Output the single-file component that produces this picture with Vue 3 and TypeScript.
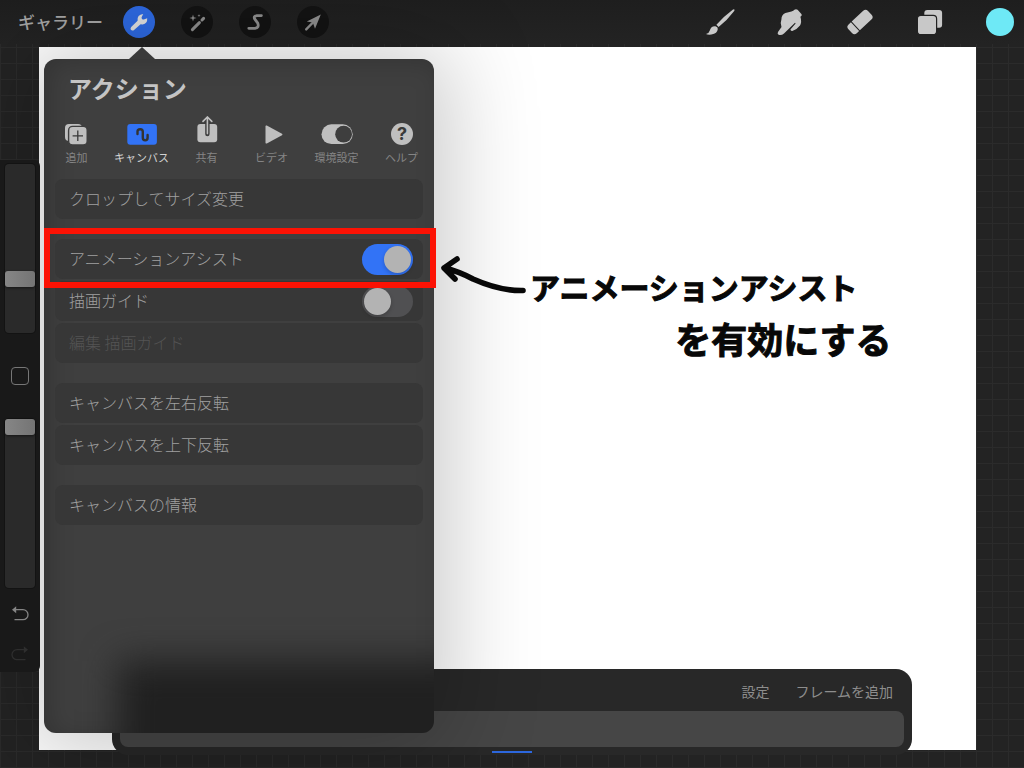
<script setup lang="ts">
import { ref } from 'vue'

interface Tab { id: string; label: string }
interface Row { label: string; kind: 'button' | 'switch'; on?: boolean; disabled?: boolean; marked?: boolean }

const tabs: Tab[] = [
  { id: 'add', label: '追加' },
  { id: 'canvas', label: 'キャンバス' },
  { id: 'share', label: '共有' },
  { id: 'video', label: 'ビデオ' },
  { id: 'prefs', label: '環境設定' },
  { id: 'help', label: 'ヘルプ' },
]
const activeTab = ref('canvas')

const groups = ref<Row[][]>([
  [{ label: 'クロップしてサイズ変更', kind: 'button' }],
  [
    { label: 'アニメーションアシスト', kind: 'switch', on: true, marked: true },
    { label: '描画ガイド', kind: 'switch', on: false },
    { label: '編集 描画ガイド', kind: 'button', disabled: true },
  ],
  [
    { label: 'キャンバスを左右反転', kind: 'button' },
    { label: 'キャンバスを上下反転', kind: 'button' },
  ],
  [{ label: 'キャンバスの情報', kind: 'button' }],
])

const brushSize = ref(30)
const brushOpacity = ref(100)
</script>

<template>
  <div class="app">
    <header class="topbar">
      <button class="gallery" type="button">ギャラリー</button>
      <nav class="modes">
        <button class="mode active" type="button" aria-label="アクション">
          <svg viewBox="0 0 24 24"><path d="M16.2 4 L14.6 7.2 Q14.4 9.6 16.8 9.6 L20.2 8.2 Q20.6 13.8 15.6 14.4 L13.6 14.2 L6.8 20.2 Q5 21 3.9 19.8 Q3 18.4 4.2 17 L10.6 10.8 Q9.8 4.8 16.2 4Z" fill="#dcdcdc" /></svg>
        </button>
        <button class="mode" type="button" aria-label="調整">
          <svg viewBox="0 0 24 24" fill="none" stroke="#8c8c8c" stroke-linecap="round">
            <path d="M7.4 19.6 L14.4 12.6 M17 10 L18.6 8.4" stroke-width="3" />
            <path d="M8 4.4 L8.8 7.2 L11.6 8 L8.8 8.8 L8 11.6 L7.2 8.8 L4.4 8 L7.2 7.2Z M14 4 L14.4 5.2 L15.6 5.6 L14.4 6 L14 7.2 L13.6 6 L12.4 5.6 L13.6 5.2Z" fill="#8c8c8c" stroke="none" />
          </svg>
        </button>
        <button class="mode" type="button" aria-label="選択">
          <svg viewBox="0 0 24 24" fill="none" stroke="#8c8c8c" stroke-width="2.8" stroke-linecap="round" stroke-linejoin="round"><path d="M18.4 5.6 H14 Q10 6.2 11.8 9.2 L14.8 13.2 Q16.4 17.8 12 18.3 H5.8" /></svg>
        </button>
        <button class="mode" type="button" aria-label="変形">
          <svg viewBox="0 0 24 24"><path d="M19.8 4.4 L14 18.8 L11.8 12.6 L5.8 11.4Z" fill="#8c8c8c" /><path d="M5.2 19.4 L12.4 12" stroke="#8c8c8c" stroke-width="2.4" stroke-linecap="round" /></svg>
        </button>
      </nav>
      <nav class="tools">
        <button class="tool" type="button" aria-label="ブラシ">
          <svg viewBox="0 0 30 30" fill="#c8c8c8">
            <path d="M29.2 2.2 Q30 3 29 4.2 Q22 13.5 13.6 20 L11.4 17.8 Q19 9 28 2.4Z" />
            <path d="M10.4 19.2 Q13 20 12.8 22 Q12.4 26.6 6.4 27.6 Q2.6 28 1 27 Q4 26.4 4.8 23.4 Q6 18.8 10.4 19.2Z" />
          </svg>
        </button>
        <button class="tool" type="button" aria-label="ぼかし">
          <svg viewBox="0 0 30 30" fill="#c8c8c8"><path d="M3 25 L6.5 20 Q5 16 6.4 12.6 Q6.4 7.6 10.4 6 Q13.6 5.6 16.4 4.6 Q18.6 4 19.4 2.8 Q21 1.6 22.6 2.8 L26.6 7.2 Q27.2 8.8 25.4 9.8 Q27 15 25 18.6 Q22 22.6 17.4 24 Q15.6 24 15.4 22.4 L20.6 16.6 L20 15.8 L9 26.4 Q6.6 28.6 3.6 27.8 Q2 27 3 25Z" /></svg>
        </button>
        <button class="tool" type="button" aria-label="消しゴム">
          <svg viewBox="0 0 30 30" fill="#c8c8c8">
            <g transform="rotate(-43 15 15)">
              <path d="M5 9 H8.2 V21 H5 Q1.6 21 1.6 17.6 V12.4 Q1.6 9 5 9Z" />
              <path d="M9.2 9 H25 Q28.4 9 28.4 12.4 V17.6 Q28.4 21 25 21 H9.2Z" />
            </g>
          </svg>
        </button>
        <button class="tool" type="button" aria-label="レイヤー">
          <svg viewBox="0 0 30 30" fill="#c8c8c8">
            <rect x="9.3" y="3" width="17.8" height="17.8" rx="3" />
            <rect x="2.4" y="8.4" width="19.2" height="19.2" rx="3.4" stroke="#222" stroke-width="1.2" />
          </svg>
        </button>
        <button class="tool" type="button" aria-label="カラー"><span class="swatch"></span></button>
      </nav>
    </header>

    <main class="workspace">
      <aside class="sidebar">
        <input v-model="brushSize" class="slider" type="range" min="0" max="100" aria-label="ブラシサイズ">
        <button class="modify" type="button" aria-label="修正"></button>
        <input v-model="brushOpacity" class="slider" type="range" min="0" max="100" aria-label="不透明度">
        <button class="history undo" type="button" aria-label="取り消す">
          <svg viewBox="0 0 20 20"><path d="M6 5.7 H13 A5 5 0 0 1 13 15.7 H4.5" fill="none" stroke="currentColor" stroke-width="1.3" /><path d="M2 5.7 L6.2 2.2 V9.2Z" fill="currentColor" /></svg>
        </button>
        <button class="history redo" type="button" aria-label="やり直す">
          <svg viewBox="0 0 20 20"><path d="M14 5.7 H7 A5 5 0 0 0 7 15.7 H15.5" fill="none" stroke="currentColor" stroke-width="1.3" /><path d="M18 5.7 L13.8 2.2 V9.2Z" fill="currentColor" /></svg>
        </button>
      </aside>

      <section class="canvas">
        <div class="note">
          <svg class="arrow" viewBox="0 0 90 42" fill="none" stroke="#080808" stroke-width="5.6" stroke-linecap="round" stroke-linejoin="round">
            <path d="M17 7 L4 16 L15 27 M4 16 Q18 19 33 27 Q60 39 83 38.5" />
          </svg>
          <p class="note-text"><span class="line-one">アニメーションアシスト</span><span class="line-two">を有効にする</span></p>
        </div>
      </section>
    </main>

    <footer class="timeline">
      <div class="timeline-actions">
        <button type="button">設定</button>
        <button type="button">フレームを追加</button>
      </div>
      <div class="tray"></div>
      <div class="playhead"></div>
    </footer>

    <section class="popover" aria-label="アクション">
      <div class="backdrop"></div>
      <h1>アクション</h1>
      <div class="tabs" role="tablist">
        <button
          v-for="tab in tabs" :key="tab.id" type="button" role="tab" class="tab"
          :class="{ selected: tab.id === activeTab }" :aria-selected="tab.id === activeTab"
          @click="activeTab = tab.id"
        >
          <svg viewBox="0 0 32 32" fill="#bfbfbf">
            <template v-if="tab.id === 'add'">
              <rect x="4" y="8" width="17" height="17" rx="4" />
              <rect x="7.6" y="10.4" width="18.6" height="18.6" rx="4" stroke="#3e3e3e" stroke-width="1.4" />
              <path d="M16.8 14.6 V25 M11.6 19.8 H22" stroke="#3a3a3a" stroke-width="1.3" />
            </template>
            <template v-else-if="tab.id === 'canvas'">
              <rect x="1.3" y="8" width="29.6" height="20.8" rx="3" fill="#3273f6" />
              <path d="M11.5 18 V15.6 Q11.5 13.2 14.2 13.2 Q16.8 13.2 16.8 15.8 V21.8 Q16.8 24.4 19.2 24.4 Q21.6 24.4 21.6 21.8 V19" fill="none" stroke="#333" stroke-width="2.4" stroke-linecap="round" />
            </template>
            <template v-else-if="tab.id === 'share'">
              <rect x="6.4" y="8" width="19.8" height="18.2" rx="3" />
              <path d="M16.4 5 V18" stroke="#3e3e3e" stroke-width="4.4" stroke-linecap="round" />
              <path d="M16.4 1.2 V17.6 M12 5.4 L16.4 1 L20.8 5.4" fill="none" stroke="#bfbfbf" stroke-width="1.6" stroke-linecap="round" />
            </template>
            <path v-else-if="tab.id === 'video'" d="M9.5 10.4 Q9.5 9 10.8 9.6 L26 17.8 Q27 18.5 26 19.2 L10.8 27.4 Q9.5 28 9.5 26.8Z" />
            <template v-else-if="tab.id === 'prefs'">
              <rect x="0.5" y="8.3" width="31.2" height="19.8" rx="9.9" />
              <circle cx="22.6" cy="18.2" r="8.4" fill="#3e3e3e" />
            </template>
            <template v-else>
              <circle cx="16" cy="18" r="11" />
              <text x="16" y="24.4" text-anchor="middle" font-family="Inter, 'Liberation Sans', sans-serif" font-size="18" font-weight="700" fill="#3a3a3a">?</text>
            </template>
          </svg>
          <span>{{ tab.label }}</span>
        </button>
      </div>

      <div class="groups">
        <div v-for="(group, g) in groups" :key="g" class="group">
          <template v-for="row in group" :key="row.label">
            <label v-if="row.kind === 'switch'" class="row" :class="{ marked: row.marked }">
              <span class="row-label">{{ row.label }}</span>
              <input v-model="row.on" class="switch" type="checkbox">
            </label>
            <button v-else class="row" type="button" :disabled="row.disabled"><span class="row-label">{{ row.label }}</span></button>
          </template>
        </div>
      </div>
    </section>
  </div>
</template>

<style>
body {
  margin: 0;
  background: #232323;
}
</style>

<style scoped>
.app {
  position: relative;
  display: flex;
  flex-direction: column;
  box-sizing: border-box;
  min-height: 100vh;
  overflow: hidden;
  background-color: #232323;
  background-image:
    linear-gradient(90deg, #2b2b2b 1px, transparent 1px),
    linear-gradient(#2b2b2b 1px, transparent 1px);
  background-size: 16px 16px;
  background-position: 0 15px;
  font-family: "Noto Sans CJK JP", "Noto Sans", sans-serif;
}

button {
  margin: 0;
  padding: 0;
  border: 0;
  background: none;
  color: inherit;
  font: inherit;
}

svg {
  display: block;
}

.topbar {
  display: flex;
  align-items: center;
  box-sizing: border-box;
  height: 44px;
  padding: 0 9px 0 18px;
  background: linear-gradient(#1e1e1e, #232323);
}

.gallery {
  color: #a3a3a3;
  font-size: 17px;
  font-weight: 500;
  line-height: 24px;
}

.modes {
  display: flex;
  gap: 26px;
  margin-left: 20px;
}

.mode {
  display: grid;
  place-items: center;
  width: 32px;
  height: 32px;
  border-radius: 50%;
  background: #131313;
}

.mode.active {
  background: #2d68df;
}

.mode svg {
  width: 24px;
  height: 24px;
}

.tools {
  display: flex;
  gap: 40px;
  margin-left: auto;
}

.tool {
  display: grid;
  place-items: center;
  width: 30px;
  height: 30px;
}

.tool svg {
  width: 30px;
  height: 30px;
}

.swatch {
  width: 28px;
  height: 28px;
  border-radius: 50%;
  background: #6ee9f6;
}

.workspace {
  display: flex;
  flex: 1;
  align-items: flex-start;
  padding: 3px 48px 18px 0;
}

.sidebar {
  z-index: 4;
  display: flex;
  flex-direction: column;
  align-items: center;
  box-sizing: border-box;
  width: 40px;
  margin: 113px -1px 0 0;
  padding: 4px 0 8px;
  border-radius: 0 6px 6px 0;
  background: #191919;
}

.slider {
  appearance: none;
  writing-mode: vertical-lr;
  direction: rtl;
  box-sizing: border-box;
  width: 30px;
  height: 169px;
  margin: 0;
  border-radius: 4px;
  background: #2a2a2a;
  box-shadow: 0 0 0 1px #131313;
}

.slider::-webkit-slider-thumb {
  appearance: none;
  width: 30px;
  height: 16px;
  border-radius: 3px;
  background: linear-gradient(90deg, #868686, #747474);
  box-shadow: 0 1px 3px rgba(0, 0, 0, 0.5);
}

.modify {
  box-sizing: border-box;
  width: 18px;
  height: 18px;
  margin: 34px 0;
  border: 1px solid #767676;
  border-radius: 4px;
}

.history svg {
  width: 20px;
  height: 20px;
}

.undo {
  margin-top: 16px;
  color: #858585;
}

.redo {
  margin-top: 20px;
  color: #2e2e2e;
}

.canvas {
  position: relative;
  flex: 1;
  align-self: stretch;
  background: #fff;
}

.note {
  position: absolute;
  z-index: 4;
  top: 205px;
  left: 401px;
  display: flex;
  align-items: flex-start;
}

.arrow {
  width: 90px;
  height: 42px;
}

.note-text {
  display: flex;
  flex-direction: column;
  align-items: flex-end;
  margin: 12px 0 0;
  color: #080808;
  font-weight: 700;
  white-space: nowrap;
  -webkit-text-stroke: 1px #080808;
}

.line-one {
  margin-right: 34px;
  font-size: 30px;
  line-height: 44px;
}

.line-two {
  font-size: 36px;
  line-height: 60px;
}

.timeline {
  position: absolute;
  right: 112px;
  bottom: 13px;
  left: 112px;
  display: flex;
  flex-direction: column;
  box-sizing: border-box;
  height: 86px;
  padding: 0 8px 8px;
  border-radius: 16px;
  background: #282828;
}

.timeline-actions {
  display: flex;
  justify-content: flex-end;
  align-items: center;
  gap: 26px;
  height: 42px;
  padding: 2px 11px 0 0;
  box-sizing: border-box;
  color: #8d8d8d;
  font-size: 14px;
  line-height: 20px;
}

.tray {
  flex: 1;
  border-radius: 8px;
  background: #464646;
}

.playhead {
  position: absolute;
  bottom: 2px;
  left: 50%;
  width: 40px;
  height: 2px;
  margin-left: -20px;
  background: #2d68df;
}

.popover {
  position: absolute;
  z-index: 3;
  top: 59px;
  bottom: 35px;
  left: 44px;
  width: 390px;
  border-radius: 12px;
  background: #3f3f3f;
  box-shadow: 0 4px 90px 16px rgba(0, 0, 0, 0.21);
}

.popover::before {
  content: "";
  position: absolute;
  top: -12px;
  left: 85px;
  width: 26px;
  height: 12px;
  background: #3a3a3a;
  clip-path: polygon(50% 0, 100% 100%, 0 100%);
}

.backdrop {
  position: absolute;
  inset: 0;
  overflow: hidden;
  border-radius: 12px;
  box-shadow: inset 6px 3px 24px rgba(0, 0, 0, 0.18);
}

.backdrop::before {
  content: "";
  position: absolute;
  right: -60px;
  bottom: -60px;
  left: 74px;
  height: 132px;
  background: #202020;
  filter: blur(18px);
}

.popover h1 {
  position: relative;
  margin: 0;
  padding: 13px 24px 0;
  color: #c4c4c4;
  font-size: 24px;
  font-weight: 700;
  line-height: 32px;
}

.tabs {
  position: relative;
  display: grid;
  grid-template-columns: repeat(6, 1fr);
  margin-top: 12px;
}

.tab {
  display: flex;
  flex-direction: column;
  align-items: center;
  gap: 1px;
  color: #858585;
  font-size: 11px;
  line-height: 16px;
  white-space: nowrap;
}

.tab.selected {
  color: #d2d2d2;
}

.tab svg {
  width: 32px;
  height: 32px;
}

.groups {
  position: relative;
  display: flex;
  flex-direction: column;
  gap: 20px;
  padding: 14px 11px 0;
}

.group {
  display: flex;
  flex-direction: column;
  gap: 2px;
}

.row {
  position: relative;
  display: flex;
  align-items: center;
  justify-content: space-between;
  box-sizing: border-box;
  height: 40px;
  padding: 0 10px 0 14px;
  border-radius: 8px;
  background: #373737;
  color: #a0a0a0;
  font-size: 16px;
  font-weight: 300;
  line-height: 24px;
  text-align: left;
}

.row-label {
  padding-bottom: 2px;
}

.row:disabled {
  color: #545454;
}

.row.marked {
  z-index: 1;
}

.row.marked::after {
  content: "";
  position: absolute;
  inset: -11px -13px -9px -11px;
  border: 6px solid #fc1204;
  pointer-events: none;
}

.switch {
  appearance: none;
  position: relative;
  width: 51px;
  height: 31px;
  margin: 0;
  border-radius: 16px;
  background: #505052;
}

.switch::before {
  content: "";
  position: absolute;
  top: 2px;
  left: 2px;
  width: 27px;
  height: 27px;
  border-radius: 50%;
  background: #b3b3b3;
  box-shadow: 0 2px 4px rgba(0, 0, 0, 0.2);
}

.switch:checked {
  background: #3273f6;
}

.switch:checked::before {
  left: 22px;
}
</style>
